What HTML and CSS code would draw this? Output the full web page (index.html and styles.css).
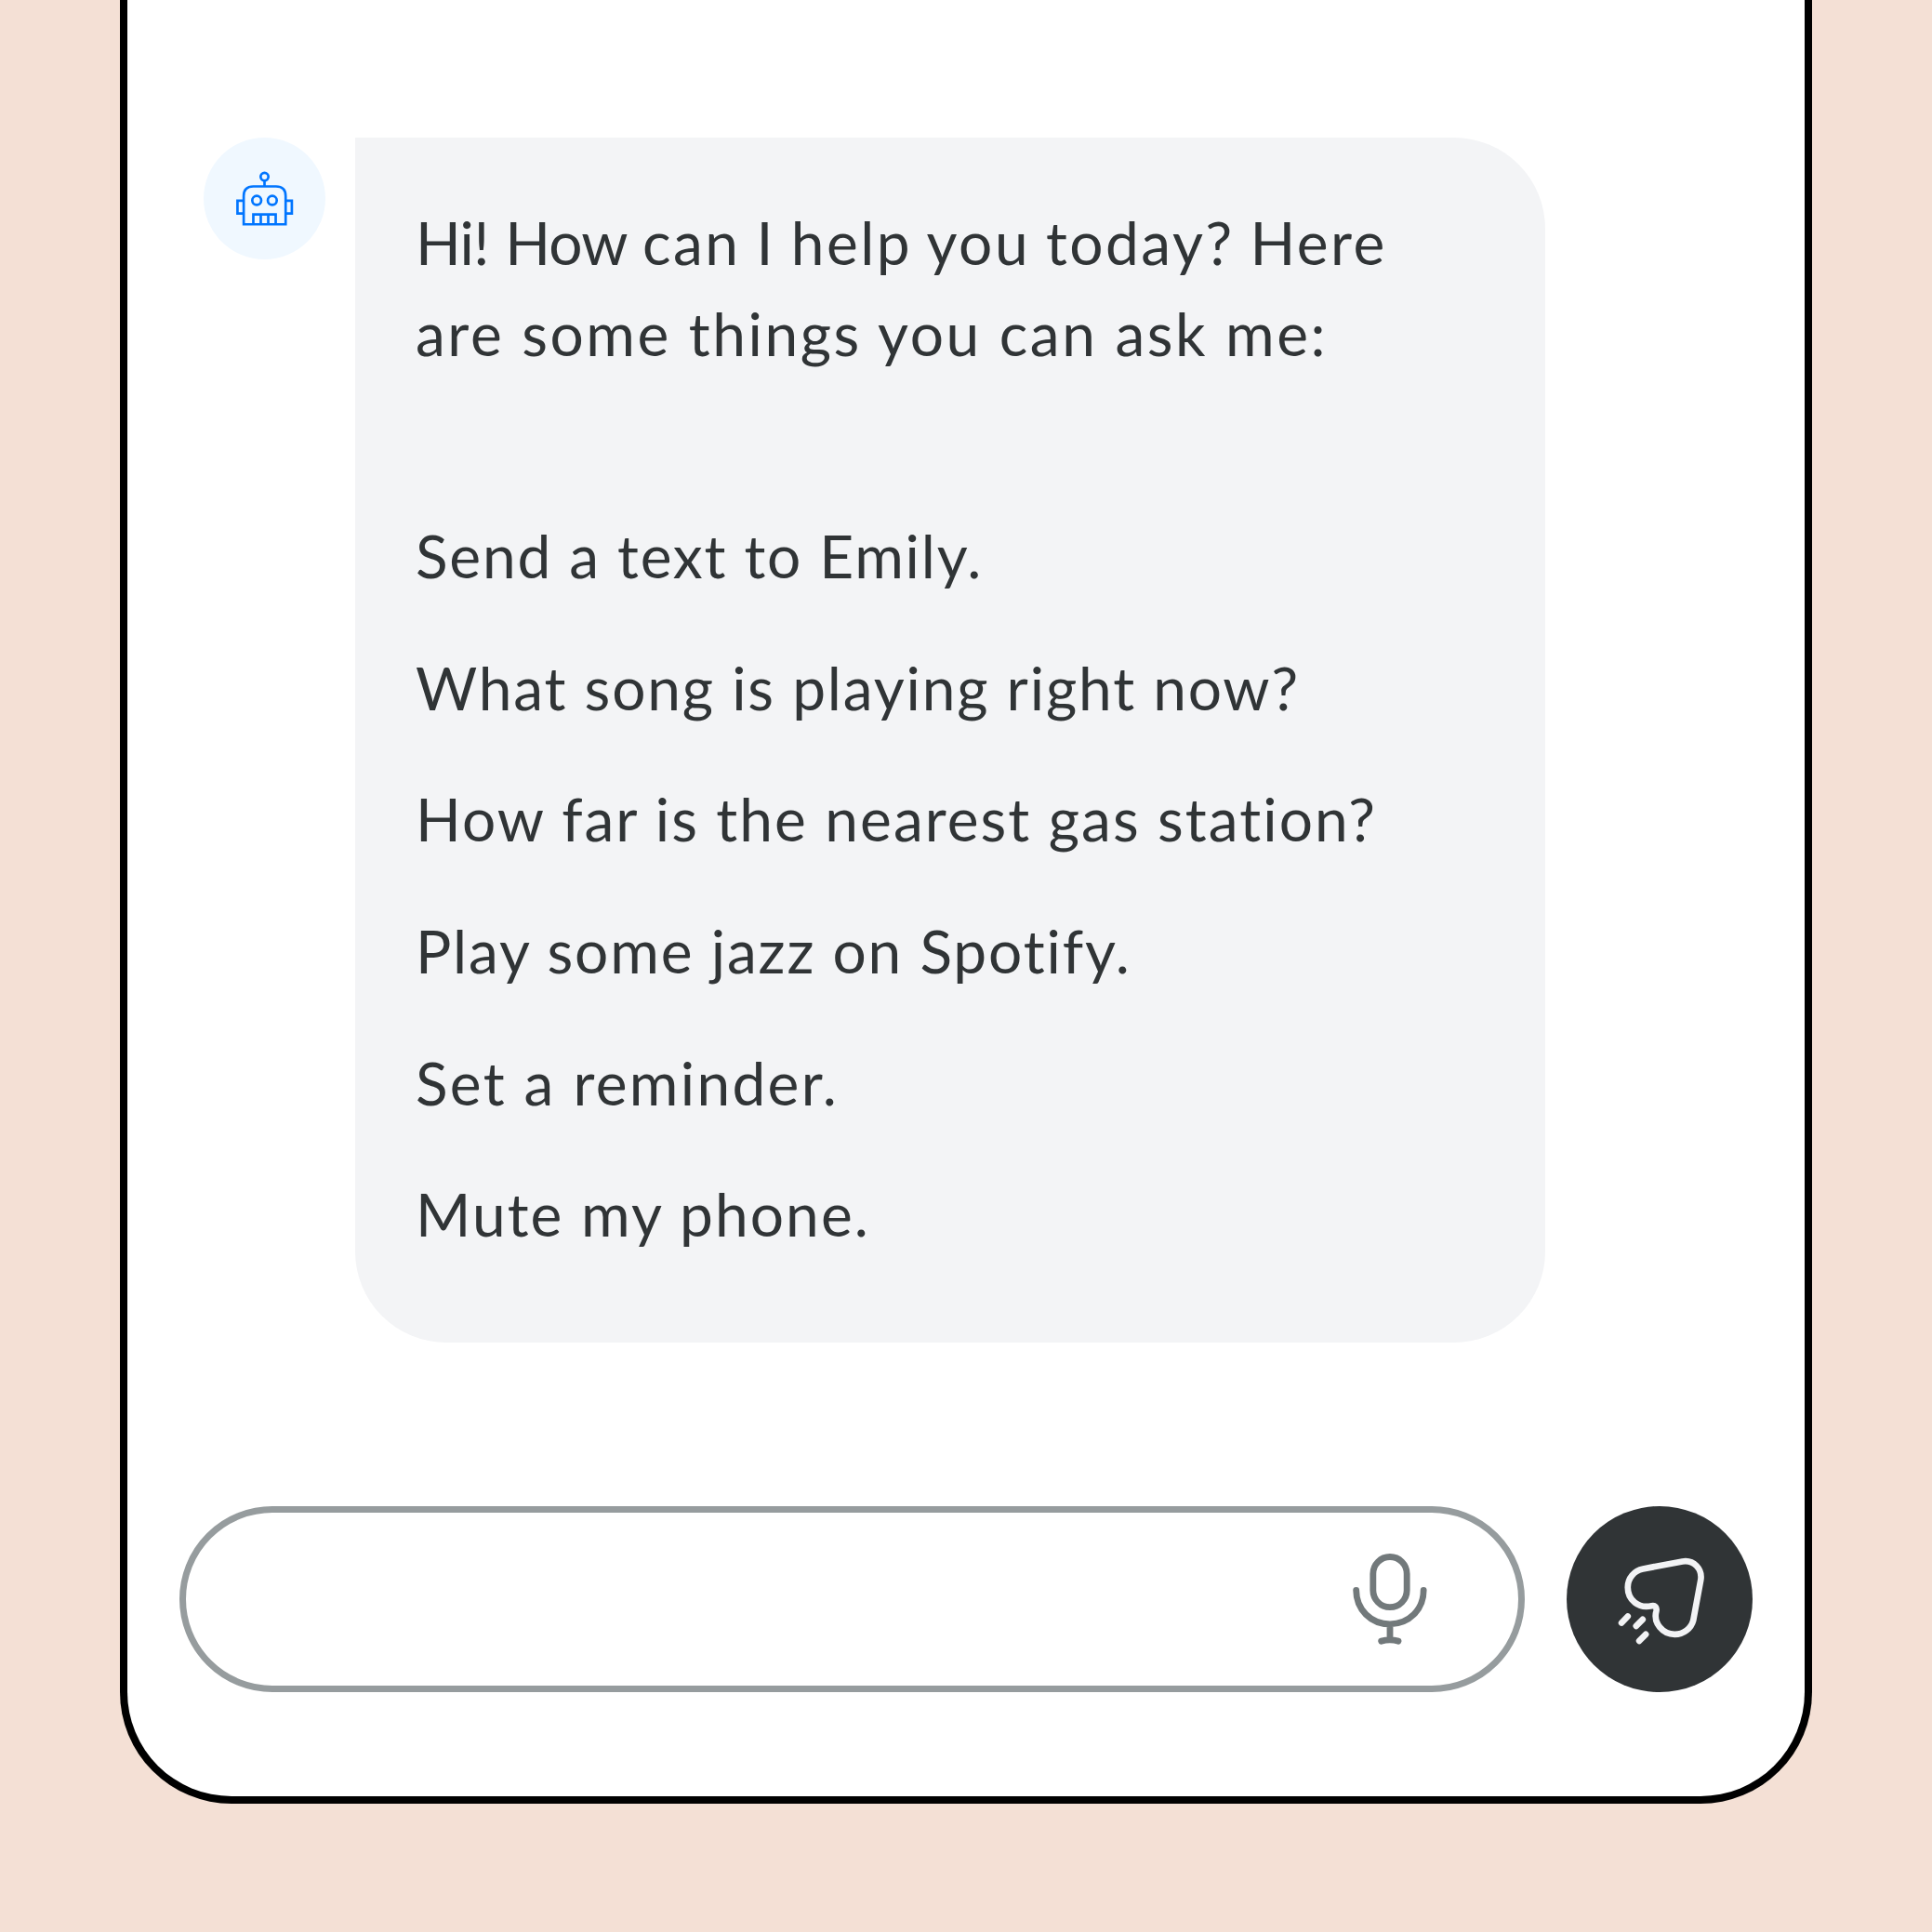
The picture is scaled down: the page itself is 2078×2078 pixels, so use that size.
FILE: index.html
```html
<!DOCTYPE html>
<html lang="en">
<head>
<meta charset="utf-8">
<title>Assistant chat</title>
<link rel="stylesheet" href="styles.css">
</head>
<body>
<main class="phone">
  <section class="message">
    <div class="avatar">
      <svg viewBox="27 25 392 392" fill="none" stroke="#0075ff" stroke-width="8">
        <circle cx="223" cy="151" r="12.5"/>
        <path d="M223 163V182M156 304V213Q156 182 187 182H260Q291 182 291 213V304ZM156 228H136V269H156M291 228H311V269H291M187 304V272H259V304M211 272V304M235 272V304"/>
        <circle cx="198" cy="227" r="14.5"/>
        <circle cx="248" cy="227" r="14.5"/>
      </svg>
    </div>
    <div class="bubble">
      <p class="greeting"><span class="line l1"><span class="tight">Hi! How </span>can I help you today? Here</span><span class="line l2">are some things you can ask me:</span></p>
      <ul class="suggestions">
        <li><span class="line l3">Send a text to Emily.</span></li>
        <li><span class="line l4">What song is playing right now?</span></li>
        <li><span class="line l5">How far is the nearest gas station?</span></li>
        <li><span class="line l6">Play some jazz on Spotify.</span></li>
        <li><span class="line l7">Set a reminder.</span></li>
        <li><span class="line l8">Mute my phone.</span></li>
      </ul>
    </div>
  </section>
  <footer class="composer">
    <div class="field">
      <svg class="mic" viewBox="0 0 390 420" fill="none" stroke="#72797b" stroke-width="20.5" stroke-linecap="round">
        <rect x="140.500" y="73.500" width="109" height="162.500" rx="54.500"/>
        <path d="M86 181C86 244 134 290.500 195 290.500S303.500 244 303.500 181M195 291V338M167 345.500Q195 338 222 345.500"/>
      </svg>
    </div>
    <button class="send" aria-label="Send">
      <svg viewBox="45 60 599 599" fill="none" stroke="#f2f3f5" stroke-width="20" stroke-linecap="round" stroke-linejoin="round">
        <path d="M291 262L418 238C455 232 483 263 477 298L453 428C446 454 422 473 393 473C355 473 323 437 334 397C336 386 330 379 319 381C277 391 242 362 242 321C242 292 263 267 291 262Z"/>
        <path d="M222 436L242 415M269 446L290 425M279 494L300 473"/>
      </svg>
    </button>
  </footer>
</main>
</body>
</html>
```
FILE: styles.css
```css
* { box-sizing: border-box; }
body { margin: 0; height: 2078px; overflow: hidden; background: #f4e0d5; }
.phone {
  width: 1820px;
  height: 1940px;
  margin: 0 auto;
  padding: 148px 56px 0 82px;
  display: flex;
  flex-direction: column;
  background: #fff;
  border: 8px solid #000;
  border-top: 0;
  border-radius: 0 0 120px 120px;
}
.message { display: flex; gap: 32px; height: 1296px; }
.avatar { width: 131px; height: 131px; border-radius: 50%; background: #f0f8ff; }
.avatar svg { display: block; width: 131px; height: 131px; }
.bubble {
  width: 1280px;
  padding: 64px 0 0 65px;
  border-radius: 0 98px 98px 98px;
  background: #f3f4f6;
  color: #303436;
  font: 64px/98px Lato, "Open Sans", sans-serif;
  font-variant-ligatures: none;
}
.greeting { margin: 0 0 141px; }
.greeting .line { display: table; }
.line { white-space: nowrap; }
.l1 { letter-spacing: 2.5px; word-spacing: -2px; }
.tight { letter-spacing: -0.8px; word-spacing: 2px; }
.l2 { letter-spacing: 2.55px; }
.l3 { letter-spacing: 1.8px; }
.l4 { letter-spacing: 1.84px; }
.l5 { letter-spacing: 2.04px; }
.l6 { letter-spacing: 1.87px; }
.l7 { letter-spacing: 2.3px; }
.l8 { letter-spacing: 2.1px; }
.suggestions { list-style: none; margin: 0; padding: 0; display: grid; grid-auto-rows: 141.700px; }
.composer { display: flex; gap: 45px; margin: 176px 0 0 -26px; }
.field {
  width: 1447px;
  height: 200px;
  display: flex;
  align-items: center;
  justify-content: flex-end;
  padding-right: 73px;
  border: 7px solid #969c9e;
  border-radius: 100px;
}
.mic { width: 130px; height: 140px; }
.send { width: 200px; height: 200px; padding: 0; border: 0; border-radius: 50%; background: #303436; }
.send svg { display: block; width: 200px; height: 200px; }
```
